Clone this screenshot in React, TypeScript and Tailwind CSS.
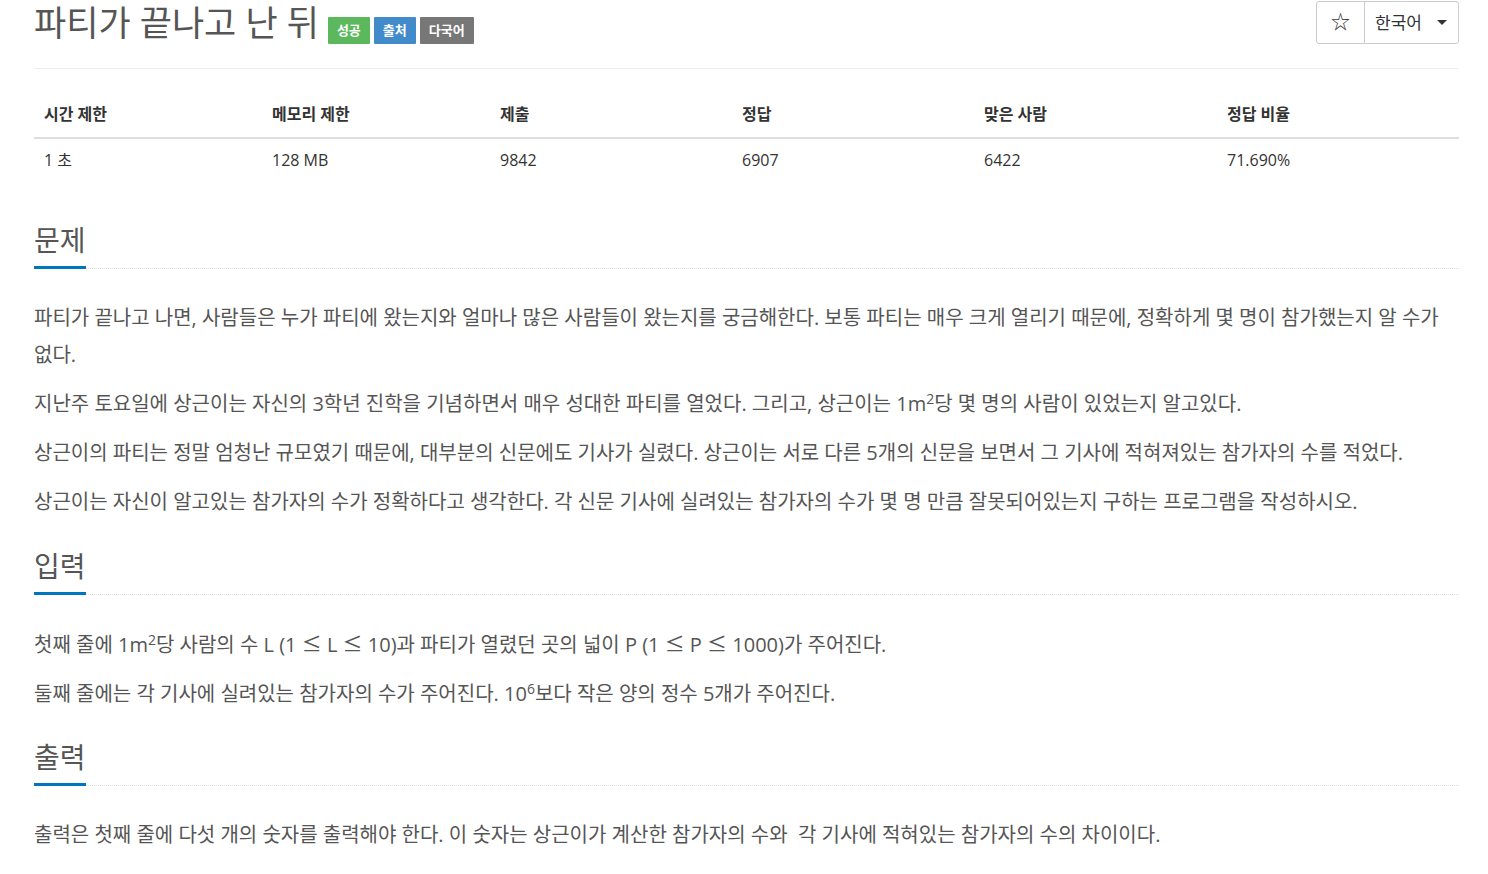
import React from "react"

const FONT = {
  fontFamily: '"Open Sans", "Noto Sans CJK KR", sans-serif',
}

type Stat = { label: string; value: string; width: string }

const stats: Stat[] = [
  { label: "시간 제한", value: "1 초", width: "w-[228px]" },
  { label: "메모리 제한", value: "128 MB", width: "w-[228px]" },
  { label: "제출", value: "9842", width: "w-[242px]" },
  { label: "정답", value: "6907", width: "w-[242px]" },
  { label: "맞은 사람", value: "6422", width: "w-[243px]" },
  { label: "정답 비율", value: "71.690%", width: "flex-1" },
]

function Headline({ title }: { title: string }) {
  return (
    <div className="flex border-b border-dotted border-[#ddd]">
      <h2 className="-mb-px border-b-[3px] border-[#0076c0] pb-[7px] text-[28px] leading-[38px] font-normal text-[#555]">
        {title}
      </h2>
    </div>
  )
}

function Para({ children }: { children: React.ReactNode }) {
  return <p className="mb-3 text-[20px] leading-[37px] text-[#555]">{children}</p>
}

function Sup({ children }: { children: React.ReactNode }) {
  return <sup className="relative -top-[0.5em] align-baseline text-[14px] leading-none">{children}</sup>
}

// wide comparison sign, as in the reference
function Le() {
  return <span style={{ fontFamily: '"Noto Sans CJK KR", sans-serif' }}>≤</span>
}

export default function App() {
  return (
    <div className="h-[874px] w-full overflow-hidden bg-white pl-[34px] pr-[29px]" style={FONT}>
      {/* header */}
      <div className="flex items-start justify-between border-b border-[#eee] pb-[24px]">
        <div className="flex items-start gap-[4px] pt-[2px]">
          <h1 className="mr-[5px] text-[35px] leading-[42px] font-normal text-[#555]">파티가 끝나고 난 뒤</h1>
          <span className="mt-[15px] rounded-[1px] bg-[#5cb85c] px-[9px] text-[13px] leading-[27px] font-bold text-white">성공</span>
          <span className="mt-[15px] rounded-[1px] bg-[#428bca] px-[9px] text-[13px] leading-[27px] font-bold text-white">출처</span>
          <span className="mt-[15px] rounded-[1px] bg-[#777] px-[9px] text-[13px] leading-[27px] font-bold text-white">다국어</span>
        </div>
        <div className="mt-px flex h-[43px] rounded-[3px] border border-[#ccc] text-[#333]">
          <button className="flex w-[48px] items-center justify-center border-r border-[#ccc] text-[19px]">☆</button>
          <button className="flex w-[93px] items-center gap-[15px] pl-[10px] text-[17px]">
            한국어
            <span className="h-0 w-0 border-x-[5px] border-t-[5px] border-x-transparent border-t-[#333]" />
          </button>
        </div>
      </div>

      {/* stats table */}
      <div className="mt-[34px] text-[16px] text-[#333]">
        <div className="flex border-b-2 border-[#ddd] font-bold">
          {stats.map((s) => (
            <div key={s.label} className={`${s.width} px-[10px] pb-[12px] leading-[22px]`}>
              {s.label}
            </div>
          ))}
        </div>
        <div className="flex">
          {stats.map((s) => (
            <div key={s.label} className={`${s.width} px-[10px] pt-[10px] leading-[22px]`}>
              {s.value}
            </div>
          ))}
        </div>
      </div>

      {/* 문제 */}
      <section className="mt-[50px]">
        <Headline title="문제" />
        <div className="pt-[30px]">
          <Para>
            파티가 끝나고 나면, 사람들은 누가 파티에 왔는지와 얼마나 많은 사람들이 왔는지를 궁금해한다. 보통 파티는 매우 크게 열리기 때문에, 정확하게 몇 명이 참가했는지 알 수가 없다.
          </Para>
          <Para>
            지난주 토요일에 상근이는 자신의 3학년 진학을 기념하면서 매우 성대한 파티를 열었다. 그리고, 상근이는 1m<Sup>2</Sup>당 몇 명의 사람이 있었는지 알고있다.
          </Para>
          <Para>
            상근이의 파티는 정말 엄청난 규모였기 때문에, 대부분의 신문에도 기사가 실렸다. 상근이는 서로 다른 5개의 신문을 보면서 그 기사에 적혀져있는 참가자의 수를 적었다.
          </Para>
          <Para>
            상근이는 자신이 알고있는 참가자의 수가 정확하다고 생각한다. 각 신문 기사에 실려있는 참가자의 수가 몇 명 만큼 잘못되어있는지 구하는 프로그램을 작성하시오.
          </Para>
        </div>
      </section>

      {/* 입력 */}
      <section className="mt-[27px]">
        <Headline title="입력" />
        <div className="pt-[30px]">
          <Para>
            첫째 줄에 1m<Sup>2</Sup>당 사람의 수 L (1 <Le /> L <Le /> 10)과 파티가 열렸던 곳의 넓이 P (1 <Le /> P <Le /> 1000)가 주어진다.
          </Para>
          <Para>
            둘째 줄에는 각 기사에 실려있는 참가자의 수가 주어진다. 10<Sup>6</Sup>보다 작은 양의 정수 5개가 주어진다.
          </Para>
        </div>
      </section>

      {/* 출력 */}
      <section className="mt-[26px]">
        <Headline title="출력" />
        <div className="pt-[30px]">
          <Para>
            출력은 첫째 줄에 다섯 개의 숫자를 출력해야 한다. 이 숫자는 상근이가 계산한 참가자의 수와&nbsp; 각 기사에 적혀있는 참가자의 수의 차이이다.
          </Para>
        </div>
      </section>
    </div>
  )
}
